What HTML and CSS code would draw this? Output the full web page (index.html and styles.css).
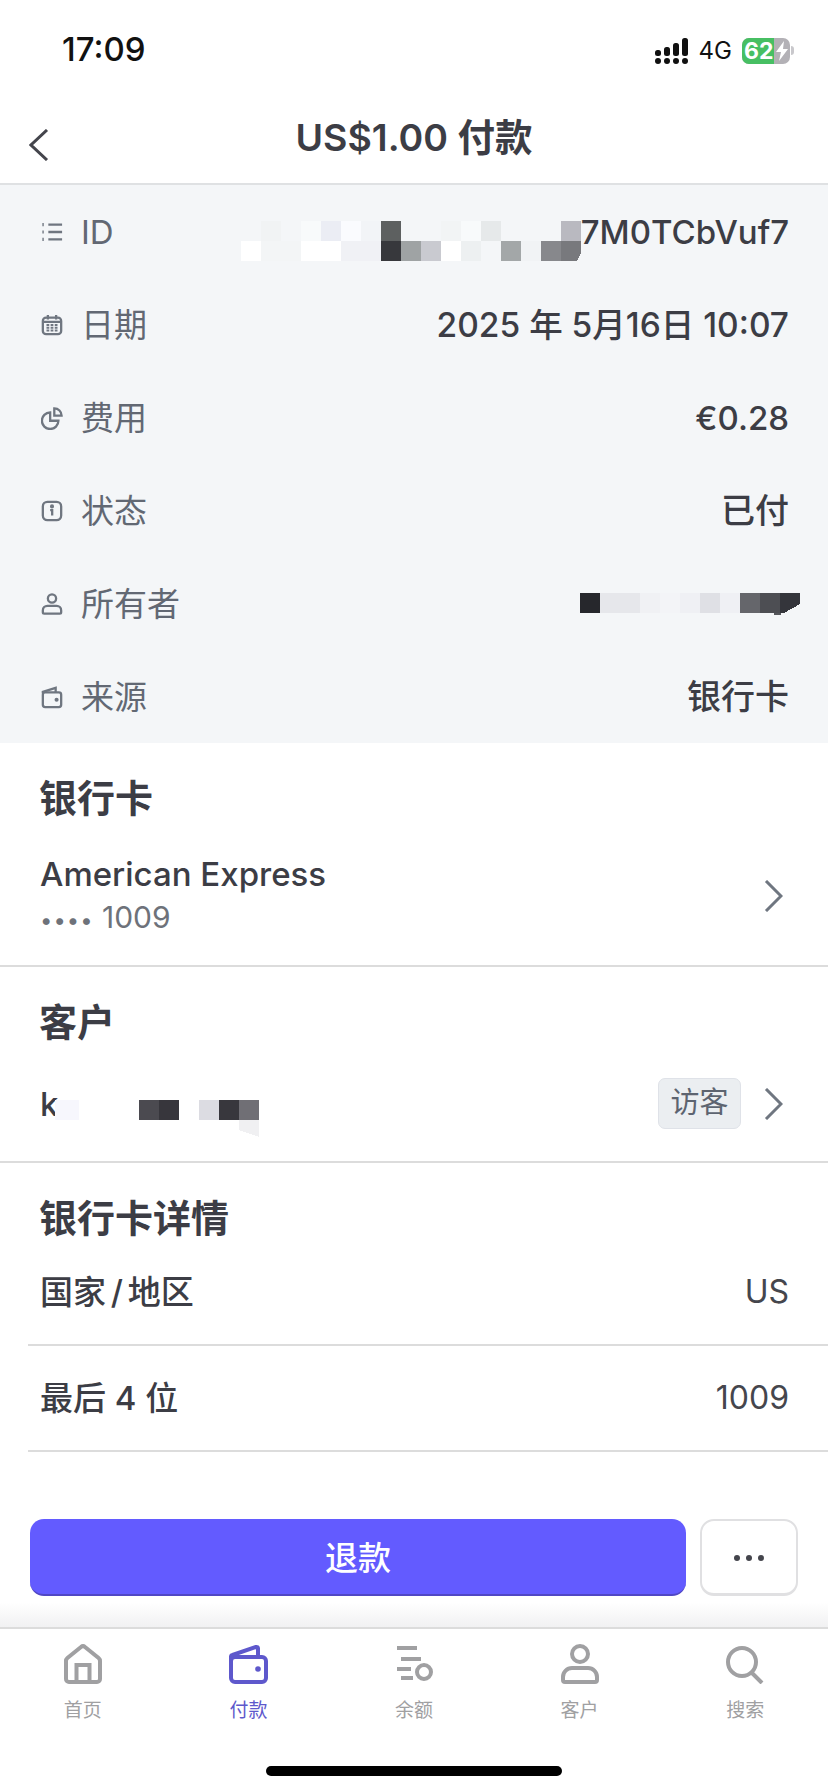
FILE: index.html
```html
<!DOCTYPE html>
<html lang="zh">

<head>
    <meta charset="UTF-8" name="viewport" content="width=device-width, initial-scale=1.0">
    <title>US$1.00 付款</title>
    <link rel="stylesheet" href="styles.css">
</head>

<body>
    <div class="statusBar">
        <div class="time">17:09</div>
        <div class="statusIcons">
            <svg class="signal" width="33" height="26" viewBox="0 0 33 26">
                <rect x="0" y="12" width="6" height="6" rx="2.5" />
                <rect x="9" y="9" width="6" height="9" rx="2.5" />
                <rect x="18" y="5" width="6" height="13" rx="2.5" />
                <rect x="27" y="0" width="6" height="18" rx="2.5" />
                <circle cx="3" cy="23" r="3" />
                <circle cx="12" cy="23" r="3" />
                <circle cx="21" cy="23" r="3" />
                <circle cx="30" cy="23" r="3" />
            </svg>
            <span class="network">4G</span>
            <div class="battery">
                <span class="batteryLevel">62</span>
                <div class="batteryRest">
                    <svg width="14" height="20" viewBox="0 0 14 20">
                        <path d="M9 0 1 11h5l-2 9 9-12H8z" fill="#fff" />
                    </svg>
                </div>
            </div>
            <div class="batteryNub"></div>
        </div>
    </div>

    <div class="navBar">
        <svg class="backIcon" width="20" height="32" viewBox="0 0 20 32">
            <path d="M18 1 2 16l16 15" />
        </svg>
        <div class="navTitle">US$1.00 付款</div>
    </div>

    <div class="main">
        <div class="details">
            <div class="detailRow">
                <svg class="rowIcon" viewBox="0 0 24 24">
                    <path d="M8 4h15M8 12h15M8 20h15" />
                    <path d="M1.500 4h1.500M1.500 12h1.500M1.500 20h1.500" stroke-width="3.500" />
                </svg>
                <span class="rowLabel">ID</span>
                <svg class="mosaicId" width="340" height="40" viewBox="0 0 340 40" shape-rendering="crispEdges">
                    <rect x="20" width="20" height="20" fill="#f1f3f4" />
                    <rect x="60" width="20" height="20" fill="#f8fafb" />
                    <rect x="80" width="20" height="20" fill="#ebedf4" />
                    <rect x="100" width="20" height="20" fill="#fafbfe" />
                    <rect x="120" width="20" height="20" fill="#f2f4f7" />
                    <rect x="140" width="20" height="20" fill="#5d6060" />
                    <rect x="200" width="20" height="20" fill="#f2f4f5" />
                    <rect x="220" width="20" height="20" fill="#f8fafb" />
                    <rect x="240" width="20" height="20" fill="#e6e9ea" />
                    <rect x="320" width="20" height="20" fill="#b9b9c0" />
                    <rect y="20" width="20" height="20" fill="#fff" />
                    <rect x="20" y="20" width="40" height="20" fill="#f3f5f6" />
                    <rect x="60" y="20" width="40" height="20" fill="#fff" />
                    <rect x="100" y="20" width="40" height="20" fill="#f0f1f5" />
                    <rect x="140" y="20" width="20" height="20" fill="#37383c" />
                    <rect x="160" y="20" width="20" height="20" fill="#9fa3a4" />
                    <rect x="180" y="20" width="20" height="20" fill="#c9cad0" />
                    <rect x="200" y="20" width="20" height="20" fill="#fff" />
                    <rect x="220" y="20" width="20" height="20" fill="#edf0f1" />
                    <rect x="260" y="20" width="20" height="20" fill="#a3a7a8" />
                    <rect x="280" y="20" width="20" height="20" fill="#f1f3f5" />
                    <rect x="300" y="20" width="20" height="20" fill="#87888c" />
                    <path d="M320 20h20v12l-4 8h-16z" fill="#78797d" />
                </svg>
                <span class="rowValue">7M0TCbVuf7</span>
            </div>
            <div class="detailRow">
                <svg class="rowIcon" viewBox="0 0 24 24">
                    <rect x="2" y="4" width="20" height="18" rx="3.500" />
                    <path d="M7.500 1v5M16.500 1v5M2.500 8.500h19" />
                    <path d="M6 12h3M10.500 12h3M15 12h3M6 15h3M10.500 15h3M15 15h3M6 18h3M10.500 18h3M15 18h3" stroke-width="2" />
                </svg>
                <span class="rowLabel">日期</span>
                <span class="rowValue rowDate">2025 年 5月16日 10:07</span>
            </div>
            <div class="detailRow">
                <svg class="rowIcon" viewBox="0 0 24 24">
                    <path d="M10 6a9 9 0 1 0 9 9h-9z" />
                    <path d="M14.500 1.500a8 8 0 0 1 8 8h-8z" />
                </svg>
                <span class="rowLabel">费用</span>
                <span class="rowValue">€0.28</span>
            </div>
            <div class="detailRow">
                <svg class="rowIcon" viewBox="0 0 24 24">
                    <rect x="2" y="2" width="20" height="20" rx="5" />
                    <path d="M10 11h2.200v6" />
                    <circle cx="12" cy="7" r="1" fill="#6f7680" />
                </svg>
                <span class="rowLabel">状态</span>
                <span class="rowValue rowWords">已付</span>
            </div>
            <div class="detailRow">
                <svg class="rowIcon" viewBox="0 0 24 24">
                    <circle cx="12" cy="6" r="4.500" />
                    <path d="M7 14h10a5 5 0 0 1 5 5v2a1.500 1.500 0 0 1-1.500 1.500h-17A1.500 1.500 0 0 1 2 21v-2a5 5 0 0 1 5-5z" />
                </svg>
                <span class="rowLabel">所有者</span>
                <svg class="mosaicOwner" width="220" height="23" viewBox="0 0 220 23" shape-rendering="crispEdges">
                    <rect width="20" height="20" fill="#26272c" />
                    <rect x="20" width="40" height="20" fill="#e6e7eb" />
                    <rect x="60" width="20" height="20" fill="#f0f1f4" />
                    <rect x="80" width="20" height="20" fill="#f3f4f7" />
                    <rect x="100" width="20" height="20" fill="#eff0f4" />
                    <rect x="120" width="20" height="20" fill="#dfe0e5" />
                    <rect x="140" width="20" height="20" fill="#eff0f4" />
                    <rect x="160" width="20" height="20" fill="#65666b" />
                    <rect x="180" width="20" height="20" fill="#4d4e53" />
                    <path d="M200 0h20v11l-16 9h-4z" fill="#34353b" />
                    <path d="M194 20h7v2h-7z" fill="#55565b" />
                </svg>
            </div>
            <div class="detailRow">
                <svg class="rowIcon" viewBox="0 0 24 24">
                    <rect x="2" y="7" width="20" height="16" rx="2.500" />
                    <path d="M2 8V6.500L16 2v5" />
                    <circle cx="17" cy="15" r="1" fill="#6f7680" />
                </svg>
                <span class="rowLabel">来源</span>
                <span class="rowValue rowWords">银行卡</span>
            </div>
        </div>

        <div class="section">
            <div class="sectionTitle">银行卡</div>
            <div class="cardRow">
                <div>
                    <div class="cardName">American Express</div>
                    <div class="cardNumber"><span class="cardDots">••••</span> 1009</div>
                </div>
                <svg class="chevron" width="19" height="32" viewBox="0 0 19 32">
                    <path d="M2 1l15 15L2 31" />
                </svg>
            </div>
        </div>

        <div class="section">
            <div class="sectionTitle">客户</div>
            <div class="customerRow">
                <div class="customerName">
                    <span class="cardName">k</span>
                    <svg class="mosaicName" width="206" height="37" viewBox="0 0 206 37" shape-rendering="crispEdges">
                        <rect x="2" width="24" height="20" fill="#f7f7fd" />
                        <rect x="86" width="20" height="20" fill="#4b4a50" />
                        <rect x="106" width="20" height="20" fill="#37363c" />
                        <rect x="146" width="20" height="20" fill="#dcdce2" />
                        <rect x="166" width="20" height="20" fill="#38373d" />
                        <rect x="186" width="20" height="20" fill="#706f75" />
                        <path d="M186 20h20v17l-20-7z" fill="#f0f0f2" />
                    </svg>
                </div>
                <span class="badge">访客</span>
                <svg class="chevron" width="19" height="32" viewBox="0 0 19 32">
                    <path d="M2 1l15 15L2 31" />
                </svg>
            </div>
        </div>

        <div class="cardDetails">
            <div class="sectionTitle">银行卡详情</div>
            <div class="infoRow">
                <span class="infoLabel tightWords">国家 / 地区</span>
                <span class="infoValue">US</span>
            </div>
            <div class="infoRow">
                <span class="infoLabel">最后 4 位</span>
                <span class="infoValue">1009</span>
            </div>
        </div>

        <div class="actions">
            <div class="refundButton">退款</div>
            <div class="moreButton"><span class="moreDot"></span><span class="moreDot"></span><span class="moreDot"></span></div>
        </div>
    </div>

    <div class="tabBar">
        <div class="tabs">
            <div class="tab">
                <svg class="tabIcon" viewBox="0 0 40 40">
                    <path d="M6 38h28a3 3 0 0 0 3-3V17a4 4 0 0 0-1.400-3L22 3a3 3 0 0 0-4 0L4.400 14A4 4 0 0 0 3 17v18a3 3 0 0 0 3 3z" />
                    <path d="M13.500 38V21h13v17" />
                </svg>
                <span class="tabLabel">首页</span>
            </div>
            <div class="tab tabActive">
                <svg class="tabIcon" viewBox="0 0 40 40">
                    <rect x="3" y="13" width="35" height="25" rx="4" />
                    <path d="M3 17v-4a2 2 0 0 1 1.500-2L28 3a1.500 1.500 0 0 1 2 1.500V13" />
                    <circle cx="30" cy="25" r="2.800" fill="#5e58cc" stroke="none" />
                </svg>
                <span class="tabLabel">付款</span>
            </div>
            <div class="tab">
                <svg class="tabIcon" viewBox="0 0 40 40">
                    <path d="M3 4h20M7 15h20M3 25h14M7 34h12" />
                    <circle cx="30" cy="28" r="7" />
                </svg>
                <span class="tabLabel">余额</span>
            </div>
            <div class="tab">
                <svg class="tabIcon" viewBox="0 0 40 40">
                    <circle cx="20" cy="10" r="8" />
                    <path d="M12 24h16a9 9 0 0 1 9 9v3a2 2 0 0 1-2 2H5a2 2 0 0 1-2-2v-3a9 9 0 0 1 9-9z" />
                </svg>
                <span class="tabLabel">客户</span>
            </div>
            <div class="tab">
                <svg class="tabIcon" viewBox="0 0 40 40">
                    <circle cx="17" cy="18" r="14" />
                    <path d="M27 29l10 10" />
                </svg>
                <span class="tabLabel">搜索</span>
            </div>
        </div>
        <div class="homeBar"></div>
    </div>
</body>

</html>
```

FILE: styles.css
```css
body {
    margin: 0;
    height: 1792px;
    display: flex;
    flex-direction: column;
    overflow: hidden;
    background-color: white;
    color: #3c3d45;
    font-family: Inter, "Noto Sans CJK SC", sans-serif;
}

/* status bar */
.statusBar {
    height: 90px;
    box-sizing: border-box;
    padding: 28px 34px 0 62px;
    display: flex;
    justify-content: space-between;
    align-items: flex-start;
}

.time {
    font-size: 33px;
    line-height: 42px;
    font-weight: 500;
    color: #111;
}

.statusIcons {
    display: flex;
    align-items: center;
    margin-top: 8px;
}

.signal {
    fill: #111;
}

.network {
    margin: 0 10px 0 11px;
    font-size: 24px;
    color: #111;
}

.battery {
    width: 48px;
    height: 26px;
    display: flex;
    border-radius: 7px;
    overflow: hidden;
    background-color: #b3b1b6;
}

.batteryLevel {
    width: 30px;
    padding-left: 2px;
    background-color: #47bf63;
    color: white;
    font-size: 23px;
    line-height: 26px;
    font-weight: 700;
    white-space: nowrap;
}

.batteryRest {
    flex: 1;
    display: flex;
    align-items: center;
    justify-content: center;
}

.batteryNub {
    width: 3px;
    height: 9px;
    margin-left: 1px;
    border-radius: 0 3px 3px 0;
    background-color: #c9c8cc;
}

/* nav bar */
.navBar {
    height: 95px;
    box-sizing: border-box;
    display: flex;
    align-items: center;
    justify-content: center;
    border-bottom: 2px solid #dfe1e3;
    position: relative;
}

.navTitle {
    margin-top: 2px;
    font-size: 37.5px;
    line-height: 50px;
    font-weight: 600;
}

.backIcon {
    position: absolute;
    left: 29px;
    top: 39px;
    fill: none;
    stroke: #44454c;
    stroke-width: 3;
}

/* payment details */
.main {
    flex: 1;
    display: flex;
    flex-direction: column;
}

.details {
    background-color: #f4f6f8;
}

.detailRow {
    height: 93px;
    box-sizing: border-box;
    padding: 0 39px 0 41px;
    display: flex;
    align-items: center;
}

.rowIcon {
    width: 22px;
    height: 24px;
    flex: none;
    fill: none;
    stroke: #6f7680;
    stroke-width: 2.500;
}

.rowLabel {
    margin-left: 18px;
    margin-right: auto;
    font-size: 33px;
    line-height: 40px;
    color: #626873;
}

.rowValue {
    font-size: 33px;
    line-height: 40px;
    font-weight: 500;
}

.rowDate {
    font-size: 33.5px;
}

.rowWords {
    font-size: 34px;
}

.mosaicId {
    margin: 18px 0 0 0;
}

.mosaicOwner {
    margin: 2px -11px 0 0;
}

/* sections */
.section {
    padding: 33px 39px 28px 39px;
    border-bottom: 2px solid #dcdcdc;
}

.sectionTitle {
    font-size: 38px;
    line-height: 44px;
    font-weight: 700;
}

.cardRow {
    margin-top: 34px;
    margin-left: 1px;
    display: flex;
    justify-content: space-between;
    align-items: center;
}

.cardName {
    font-size: 33px;
    line-height: 40px;
    font-weight: 500;
}

.cardNumber {
    margin-top: 3px;
    font-size: 30px;
    line-height: 40px;
    color: #6e727a;
}

.cardDots {
    letter-spacing: 1px;
    font-size: 22px;
    line-height: 1;
}

.chevron {
    margin-right: 6px;
    fill: none;
    stroke: #6f7680;
    stroke-width: 3;
}

.customerRow {
    height: 51px;
    margin: 34px 0 4px 1px;
    display: flex;
    align-items: center;
}

.customerName {
    flex: 1;
    height: 51px;
    display: flex;
    align-items: center;
}

.mosaicName {
    align-self: flex-start;
    margin-top: 22px;
    margin-left: -5px;
}

.badge {
    width: 83px;
    height: 51px;
    box-sizing: border-box;
    margin-right: 23px;
    border: 1px solid #dfe2e8;
    border-radius: 7px;
    background-color: #ebeef1;
    color: #5d6470;
    font-size: 29px;
    line-height: 48px;
    text-align: center;
}

.cardDetails {
    padding-top: 33px;
}

.cardDetails .sectionTitle {
    margin-left: 39px;
}

.infoRow {
    height: 106px;
    box-sizing: border-box;
    margin-left: 28px;
    padding: 0 39px 0 12px;
    display: flex;
    justify-content: space-between;
    align-items: center;
    border-bottom: 2px solid #dcdcdc;
}

.infoLabel {
    font-size: 33px;
    line-height: 40px;
    font-weight: 500;
}

.tightWords {
    word-spacing: -4px;
}

.infoValue {
    font-size: 32px;
    line-height: 40px;
    color: #45464d;
}

/* actions */
.actions {
    flex: 1;
    box-sizing: border-box;
    padding: 67px 30px 0 30px;
    display: flex;
    align-items: flex-start;
    gap: 14px;
    background: linear-gradient(to bottom, white 86%, #f1f1f2);
}

.refundButton {
    flex: 1;
    height: 77px;
    box-sizing: border-box;
    border-bottom: 2px solid #5047c4;
    border-radius: 14px;
    background-color: #635bff;
    color: white;
    font-size: 33px;
    line-height: 78px;
    font-weight: 500;
    text-align: center;
}

.moreButton {
    width: 98px;
    height: 77px;
    box-sizing: border-box;
    padding-top: 2px;
    display: flex;
    align-items: center;
    justify-content: center;
    gap: 6px;
    border: 2px solid #e0e0e2;
    border-bottom-width: 3px;
    border-radius: 14px;
    background-color: white;
}

.moreDot {
    width: 6px;
    height: 6px;
    border-radius: 50%;
    background-color: #44454c;
}

/* tab bar */
.tabBar {
    height: 165px;
    box-sizing: border-box;
    border-top: 2px solid #dcdcdc;
    display: flex;
    flex-direction: column;
    background-color: white;
}

.tabs {
    display: flex;
    padding-top: 15px;
}

.tab {
    flex: 1;
    display: flex;
    flex-direction: column;
    align-items: center;
    gap: 15px;
    color: #a0a0a2;
}

.tabIcon {
    width: 40px;
    height: 40px;
    fill: none;
    stroke: currentColor;
    stroke-width: 4;
}

.tabLabel {
    font-size: 19px;
    line-height: 24px;
}

.tabActive {
    color: #5e58cc;
}

.homeBar {
    width: 296px;
    height: 10px;
    margin: auto auto 16px auto;
    border-radius: 5px;
    background-color: black;
}
```
